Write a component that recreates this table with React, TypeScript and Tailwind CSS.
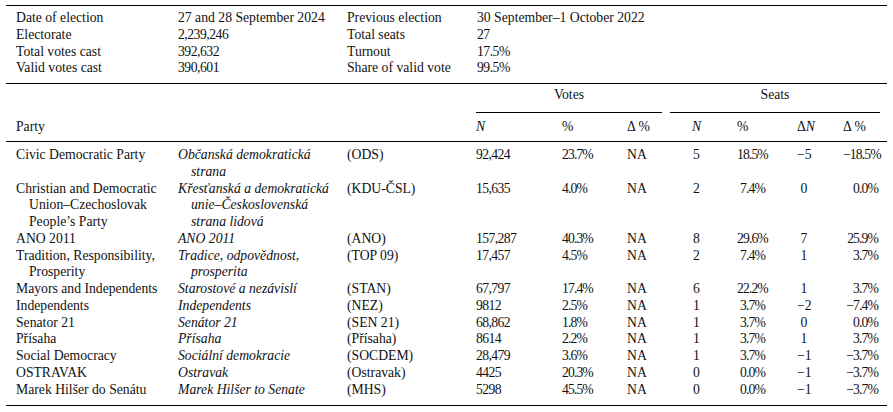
type Row = {
  party: string[];
  native: string[];
  abbr: string;
  votes: string;
  pct: string;
  dpct: string;
  seats: string;
  seatPct: string;
  dSeats: string;
  dSeatPct: string;
};

const summary = [
  ["Date of election", "27 and 28 September 2024", "Previous election", "30 September–1 October 2022"],
  ["Electorate", "2,239,246", "Total seats", "27"],
  ["Total votes cast", "392,632", "Turnout", "17.5%"],
  ["Valid votes cast", "390,601", "Share of valid vote", "99.5%"],
];

const rows: Row[] = [
  { party: ["Civic Democratic Party"], native: ["Občanská demokratická", "strana"], abbr: "(ODS)", votes: "92,424", pct: "23.7%", dpct: "NA", seats: "5", seatPct: "18.5%", dSeats: "−5", dSeatPct: "−18.5%" },
  { party: ["Christian and Democratic", "Union–Czechoslovak", "People’s Party"], native: ["Křesťanská a demokratická", "unie–Československá", "strana lidová"], abbr: "(KDU-ČSL)", votes: "15,635", pct: "4.0%", dpct: "NA", seats: "2", seatPct: "7.4%", dSeats: "0", dSeatPct: "0.0%" },
  { party: ["ANO 2011"], native: ["ANO 2011"], abbr: "(ANO)", votes: "157,287", pct: "40.3%", dpct: "NA", seats: "8", seatPct: "29.6%", dSeats: "7", dSeatPct: "25.9%" },
  { party: ["Tradition, Responsibility,", "Prosperity"], native: ["Tradice, odpovědnost,", "prosperita"], abbr: "(TOP 09)", votes: "17,457", pct: "4.5%", dpct: "NA", seats: "2", seatPct: "7.4%", dSeats: "1", dSeatPct: "3.7%" },
  { party: ["Mayors and Independents"], native: ["Starostové a nezávislí"], abbr: "(STAN)", votes: "67,797", pct: "17.4%", dpct: "NA", seats: "6", seatPct: "22.2%", dSeats: "1", dSeatPct: "3.7%" },
  { party: ["Independents"], native: ["Independents"], abbr: "(NEZ)", votes: "9812", pct: "2.5%", dpct: "NA", seats: "1", seatPct: "3.7%", dSeats: "−2", dSeatPct: "−7.4%" },
  { party: ["Senator 21"], native: ["Senátor 21"], abbr: "(SEN 21)", votes: "68,862", pct: "1.8%", dpct: "NA", seats: "1", seatPct: "3.7%", dSeats: "0", dSeatPct: "0.0%" },
  { party: ["Přísaha"], native: ["Přísaha"], abbr: "(Přísaha)", votes: "8614", pct: "2.2%", dpct: "NA", seats: "1", seatPct: "3.7%", dSeats: "1", dSeatPct: "3.7%" },
  { party: ["Social Democracy"], native: ["Sociální demokracie"], abbr: "(SOCDEM)", votes: "28,479", pct: "3.6%", dpct: "NA", seats: "1", seatPct: "3.7%", dSeats: "−1", dSeatPct: "−3.7%" },
  { party: ["OSTRAVAK"], native: ["Ostravak"], abbr: "(Ostravak)", votes: "4425", pct: "20.3%", dpct: "NA", seats: "0", seatPct: "0.0%", dSeats: "−1", dSeatPct: "−3.7%" },
  { party: ["Marek Hilšer do Senátu"], native: ["Marek Hilšer to Senate"], abbr: "(MHS)", votes: "5298", pct: "45.5%", dpct: "NA", seats: "0", seatPct: "0.0%", dSeats: "−1", dSeatPct: "−3.7%" },
];

const grid = "grid grid-cols-[162px_169px_129px_86px_65px_63px_47px_60px_46px_1fr]";

// numbers in the source are set a bit tighter than the running text
const isNum = (s: string) => /^[0-9.,%]+$/.test(s);

const Lines = ({ lines, italic }: { lines: string[]; italic?: boolean }) => (
  <div className={italic ? "italic" : ""}>
    {lines.map((l, i) => (
      <div key={i} className={i > 0 ? "pl-[13px] whitespace-nowrap" : "whitespace-nowrap"}>
        {l}
      </div>
    ))}
  </div>
);

export default function App() {
  return (
    <div className="bg-white w-[893px] h-[412px] pt-[5px] px-[6px] text-[#111] text-[13.7px] leading-[16.75px] font-['Liberation_Serif',serif]">
      {/* summary */}
      <div className="border-t border-black pt-[4px] pb-[6px] pl-[10px]">
        {summary.map((r) => (
          <div key={r[0]} className="grid grid-cols-[162px_169px_130px_1fr]">
            {r.map((c, i) => (
              <div key={i} className={isNum(c) ? "whitespace-nowrap tracking-[-0.5px]" : "whitespace-nowrap"}>
                {c}
              </div>
            ))}
          </div>
        ))}
      </div>

      {/* header */}
      <div className="border-t border-black">
        <div className="flex pt-[3px]">
          <div className="w-[470px]" />
          <div className="w-[186px] text-center border-b border-black pb-[8px]">Votes</div>
          <div className="w-[8px]" />
          <div className="w-[210px] text-center border-b border-black pb-[8px]">Seats</div>
        </div>
        <div className={`${grid} pl-[10px] pt-[6.5px] pb-[5px] border-b border-black`}>
          <div>Party</div>
          <div />
          <div />
          <div className="italic">N</div>
          <div>%</div>
          <div>Δ %</div>
          <div className="text-center pr-[34px] italic">N</div>
          <div>%</div>
          <div className="text-center pr-[32px]">
            Δ<span className="italic">N</span>
          </div>
          <div>Δ %</div>
        </div>
      </div>

      {/* body */}
      <div className="border-b border-black pt-[5px] pb-[7px] pl-[10px]">
        {rows.map((r) => (
          <div key={r.abbr} className={grid}>
            <Lines lines={r.party} />
            <Lines lines={r.native} italic />
            <div>{r.abbr}</div>
            <div className="tracking-[-0.6px]">{r.votes}</div>
            <div className="tracking-[-0.9px]">{r.pct}</div>
            <div>{r.dpct}</div>
            <div className="text-center pr-[34px]">{r.seats}</div>
            <div className="text-right pr-[32px] tracking-[-0.9px]">{r.seatPct}</div>
            <div className="text-center pr-[32px]">{r.dSeats}</div>
            <div className="text-right pr-[9px] tracking-[-0.9px]">{r.dSeatPct}</div>
          </div>
        ))}
      </div>
    </div>
  );
}
